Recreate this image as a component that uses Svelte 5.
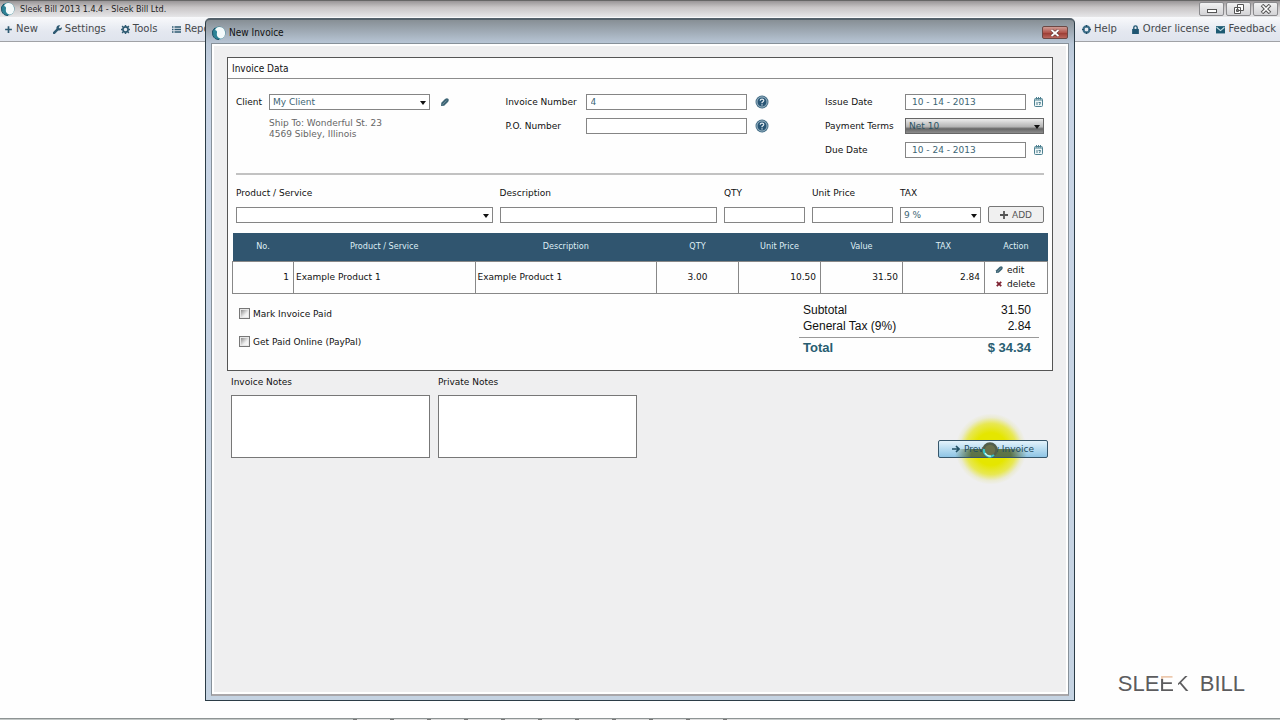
<script lang="ts">
    type Item = { name: string; description: string; qty: number; price: number; tax: number };

    let client = $state("My Client");
    let invoiceNumber = $state("4");
    let poNumber = $state("");
    let issueDate = $state("10 - 14 - 2013");
    let dueDate = $state("10 - 24 - 2013");
    let terms = $state("Net 10");
    let taxRate = $state("9 %");
    let paid = $state(false);
    let paypal = $state(false);
    let items: Item[] = $state([
        { name: "Example Product 1", description: "Example Product 1", qty: 3, price: 10.5, tax: 2.84 },
    ]);

    const subtotal = $derived(items.reduce((sum, i) => sum + i.qty * i.price, 0));
    const tax = $derived(items.reduce((sum, i) => sum + i.tax, 0));

    const tabs = Array.from({ length: 11 });

    const remove = (index: number) => {
        items = items.filter((_, i) => i !== index);
    };
</script>

{#snippet logo()}
    <svg class="logo" viewBox="0 0 14 14" aria-hidden="true">
        <circle cx="7" cy="7" r="6.5" fill="#2d8396" />
        <path d="M7 1a6 6 0 0 1 2 11.700C5 12 4.500 9 5 6.500 5.400 5 4 4 3 4 4 2 5 1 7 1z" fill="#f4fafb" />
        <path d="M3 1.800A6.500 6.500 0 0 0 7 13.500" fill="none" stroke="#174f66" stroke-width="1" />
    </svg>
{/snippet}

{#snippet pencil()}
    <svg class="pencil" viewBox="0 0 9 9" aria-hidden="true">
        <path d="M1 8 1.300 4.800 5 1Q7-.3 8.200.8T8 4L4.200 7.700z" fill="#3f6676" />
        <path d="M2.500 6.500 6.500 2.500" stroke="#8ba5b0" stroke-width=".6" />
    </svg>
{/snippet}

{#snippet help()}
    <button class="icon" aria-label="Help">
        <svg width="14" height="14" viewBox="0 0 14 14">
            <circle cx="7" cy="7" r="6.500" fill="#48718a" />
            <circle cx="7" cy="7" r="5" fill="#285575" stroke="#b6cbd7" stroke-width=".8" />
            <path d="M5.200 5.700Q5.200 4.200 7 4.200T8.800 5.600Q8.800 6.500 7 7.500V8.300M7 9.200v1.200" fill="none" stroke="#dfe9ef" stroke-width="1.200" />
        </svg>
    </button>
{/snippet}

{#snippet calendar()}
    <button class="icon" aria-label="Choose date">
        <svg width="9" height="10" viewBox="0 0 9 10">
            <rect x=".5" y="1.500" width="8" height="8" rx="1" fill="#eef6f7" stroke="#4d8090" />
            <path d="M1 3h7M2.500 0v2.500M4.500 0v2.500M6.500 0v2.500" stroke="#4d8090" />
            <path d="M3 5v3M4.500 5.500H6.500L5.500 8" fill="none" stroke="#3b7081" stroke-width=".9" />
        </svg>
    </button>
{/snippet}

<div class="app">
    <header class="titlebar">
        {@render logo()}
        <span class="title">Sleek Bill 2013 1.4.4 - Sleek Bill Ltd.</span>
        <div class="window-buttons">
            <button aria-label="Minimize">
                <svg viewBox="0 0 12 10"><rect x="1.500" y="5.500" width="9" height="3" fill="#fff" stroke="#555" /></svg>
            </button>
            <button aria-label="Restore">
                <svg viewBox="0 0 12 10"><path d="M4.500.5h6v6h-6zM1.500 3.500h6v6h-6z" fill="#fff" stroke="#555" /><path d="M3.500 5.500h2v2h-2z" stroke="#555" fill="none" /></svg>
            </button>
            <button aria-label="Close">
                <svg viewBox="0 0 12 10"><path d="M2 1 10 9M10 1 2 9" stroke="#555" stroke-width="3.600" /><path d="M2.500 1.500 9.500 8.500M9.500 1.500 2.500 8.500" stroke="#fff" stroke-width="1.600" /></svg>
            </button>
        </div>
    </header>

    <nav class="menubar">
        <a href="#new"><svg viewBox="0 0 8 8"><path d="M4 1v6M1 4h6" stroke="#2e5a72" stroke-width="1.500" /></svg>New</a>
        <a href="#settings"><svg viewBox="0 0 8 8"><path d="M1 7 4.500 3.500" stroke="#2e5a72" stroke-width="2.200" stroke-linecap="round" /><path d="M6.500.4A2.400 2.400 0 1 0 7.800 2L6 3 5 2z" fill="#2e5a72" /></svg>Settings</a>
        <a href="#tools"><svg viewBox="0 0 8 8"><circle cx="4" cy="4" r="2.300" fill="none" stroke="#2e5a72" stroke-width="1.500" /><path d="M4 0v1.500M4 6.500V8M0 4h1.500M6.500 4H8M1 1l1 1M6 6l1 1M7 1 6 2M2 6 1 7" stroke="#2e5a72" stroke-width="1.300" /></svg>Tools</a>
        <a href="#reports"><svg viewBox="0 0 9 8"><path d="M0 1.500h1.500M0 4h1.500M0 6.500h1.500M2.500 1.500H9M2.500 4H9M2.500 6.500H9" stroke="#2e5a72" stroke-width="1.300" /></svg>Reports</a>
        <div class="menu-right">
            <a href="#help"><svg viewBox="0 0 8 8"><circle cx="4" cy="4" r="2.700" fill="none" stroke="#3a6c87" stroke-width="2" /><path d="M4 0v2M4 6v2M0 4h2M6 4h2" stroke="#1f4c66" /></svg>Help</a>
            <a class="order" href="#order"><svg viewBox="0 0 8 8"><path d="M2.500 4V2.200Q2.500.8 4 .8T5.500 2.200V4" fill="none" stroke="#1f5672" stroke-width="1.200" /><path d="M1 3.500h6V8H1z" fill="#1f5672" /></svg>Order license</a>
            <a href="#feedback"><svg viewBox="0 0 8 8"><path d="M0 1h8v6.500H0z" fill="#1d5a72" /><path d="M.5 2 4 5 7.500 2" fill="none" stroke="#c6dfe5" /></svg>Feedback</a>
        </div>
    </nav>

    <main class="workspace">
        <div class="brand">
            <span>SLE<span class="e">E</span><span class="k">K</span></span>
            <span>BILL</span>
        </div>
    </main>
    <footer class="tabs">
        {#each tabs as _}
            <span></span>
        {/each}
    </footer>

    <div class="dialog" role="dialog" aria-label="New Invoice">
        <div class="dialog-title">
            {@render logo()}
            <span class="title">New Invoice</span>
            <button class="close" aria-label="Close dialog">
                <svg viewBox="0 0 10 8"><path d="M1.500 1 8.500 7M8.500 1 1.500 7" stroke="#5c3431" stroke-width="3" /><path d="M1.500 1 8.500 7M8.500 1 1.500 7" stroke="#fff" stroke-width="1.800" /></svg>
            </button>
        </div>

        <div class="dialog-body">
            <section class="panel">
                <h2>Invoice Data</h2>

                <div class="fields">
                    <div class="client">
                        <div class="field">
                            <label for="client">Client</label>
                            <span class="select wide">
                                <select id="client" bind:value={client}><option>My Client</option></select>
                            </span>
                            <button class="icon edit-client" aria-label="Edit client">{@render pencil()}</button>
                        </div>
                        <address>Ship To: Wonderful St. 23<br />4569 Sibley, Illinois</address>
                    </div>
                    <div class="numbers">
                        <div class="field">
                            <label for="invoice-number">Invoice Number</label>
                            <input id="invoice-number" type="text" bind:value={invoiceNumber} />
                            {@render help()}
                        </div>
                        <div class="field">
                            <label for="po-number">P.O. Number</label>
                            <input id="po-number" type="text" bind:value={poNumber} />
                            {@render help()}
                        </div>
                    </div>
                    <div class="dates">
                        <div class="field">
                            <label for="issue-date">Issue Date</label>
                            <input id="issue-date" type="text" bind:value={issueDate} />
                            {@render calendar()}
                        </div>
                        <div class="field">
                            <label for="terms">Payment Terms</label>
                            <span class="select terms">
                                <select id="terms" bind:value={terms}><option>Net 10</option></select>
                            </span>
                        </div>
                        <div class="field">
                            <label for="due-date">Due Date</label>
                            <input id="due-date" type="text" bind:value={dueDate} />
                            {@render calendar()}
                        </div>
                    </div>
                </div>

                <div class="line-item">
                    <div>
                        <label for="product">Product / Service</label>
                        <span class="select"><select id="product"><option></option></select></span>
                    </div>
                    <div>
                        <label for="description">Description</label>
                        <input id="description" type="text" />
                    </div>
                    <div>
                        <label for="qty">QTY</label>
                        <input id="qty" type="text" />
                    </div>
                    <div>
                        <label for="price">Unit Price</label>
                        <input id="price" type="text" />
                    </div>
                    <div>
                        <label for="tax">TAX</label>
                        <span class="select"><select id="tax" bind:value={taxRate}><option>9 %</option></select></span>
                    </div>
                    <button class="add">
                        <svg width="8" height="8" viewBox="0 0 8 8"><path d="M4 0v8M0 4h8" stroke="#555" stroke-width="1.800" /></svg>
                        ADD
                    </button>
                </div>

                <table>
                    <thead>
                        <tr>
                            <th class="no">No.</th>
                            <th>Product / Service</th>
                            <th>Description</th>
                            <th class="amount">QTY</th>
                            <th class="amount">Unit Price</th>
                            <th class="amount">Value</th>
                            <th class="amount">TAX</th>
                            <th class="action">Action</th>
                        </tr>
                    </thead>
                    <tbody>
                        {#each items as item, i}
                            <tr>
                                <td class="right">{i + 1}</td>
                                <td>{item.name}</td>
                                <td>{item.description}</td>
                                <td class="center">{item.qty.toFixed(2)}</td>
                                <td class="right">{item.price.toFixed(2)}</td>
                                <td class="right">{(item.qty * item.price).toFixed(2)}</td>
                                <td class="right">{item.tax.toFixed(2)}</td>
                                <td class="actions">
                                    <button>{@render pencil()}edit</button>
                                    <button onclick={() => remove(i)}>
                                        <svg viewBox="0 0 9 9"><path d="M2 2 7 7M7 2 2 7" stroke="#7d2030" stroke-width="2" /></svg>delete
                                    </button>
                                </td>
                            </tr>
                        {/each}
                    </tbody>
                </table>

                <div class="summary">
                    <div class="options">
                        <label><input type="checkbox" bind:checked={paid} />Mark Invoice Paid</label>
                        <label><input type="checkbox" bind:checked={paypal} />Get Paid Online (PayPal)</label>
                    </div>
                    <dl>
                        <div><dt>Subtotal</dt><dd>{subtotal.toFixed(2)}</dd></div>
                        <div><dt>General Tax (9%)</dt><dd>{tax.toFixed(2)}</dd></div>
                        <div class="total"><dt>Total</dt><dd>$ {(subtotal + tax).toFixed(2)}</dd></div>
                    </dl>
                </div>
            </section>

            <div class="bottom">
                <div class="note">
                    <label for="invoice-notes">Invoice Notes</label>
                    <textarea id="invoice-notes"></textarea>
                </div>
                <div class="note">
                    <label for="private-notes">Private Notes</label>
                    <textarea id="private-notes"></textarea>
                </div>
                <div class="preview-wrap">
                    <span class="glow"></span>
                    <button class="preview">
                        <svg width="8" height="8" viewBox="0 0 8 8"><path d="M0 4h6M4 1l3 3-3 3" fill="none" stroke="#235266" stroke-width="1.600" /></svg>
                        Preview Invoice
                    </button>
                    <svg class="busy" viewBox="0 0 18 18" aria-hidden="true">
                        <circle cx="9" cy="9" r="6.500" fill="#69704b" stroke="#525e4b" stroke-width="2.500" />
                        <path d="M3 8a6.200 6.200 0 0 0 10 6" fill="none" stroke="#39c5c8" stroke-width="2.200" />
                        <path d="M4 12a6.200 6.200 0 0 0 6 3" fill="none" stroke="#d5f6f2" stroke-width="1.200" />
                    </svg>
                </div>
            </div>
        </div>
    </div>
</div>

<style>
    :global(body) {
        margin: 0;
    }

    .app {
        position: relative;
        display: flex;
        flex-direction: column;
        min-height: 100vh;
        overflow: hidden;
        background: #fefefe;
        color: #111;
        font: 9px/12px "DejaVu Sans", Verdana, sans-serif;
    }

    .app * {
        box-sizing: border-box;
    }

    button,
    input,
    select,
    textarea {
        margin: 0;
        font: inherit;
        color: inherit;
    }

    button {
        display: flex;
        align-items: center;
        justify-content: center;
        padding: 0;
        cursor: pointer;
    }

    /* main window */
    .titlebar {
        display: flex;
        align-items: center;
        gap: 5px;
        height: 17px;
        padding: 0 2px 0 1px;
        border-top: 1px solid #666;
        background: linear-gradient(#999597, #c8c5c6 40%, #e6e6e8);
    }

    .logo {
        flex: none;
        width: 14px;
        height: 14px;
    }

    .title {
        flex: 1;
        font: 9px/14px "DejaVu Sans Condensed", Tahoma, sans-serif;
        color: #222;
    }

    .window-buttons {
        display: flex;
        gap: 2px;
    }

    .window-buttons button {
        width: 25px;
        height: 14px;
        border: 1px solid #8b8b8e;
        border-radius: 2px;
        background: linear-gradient(#f1f1f2, #d3d3d6);
    }

    .window-buttons svg {
        width: 12px;
        height: 10px;
    }

    .menubar {
        display: flex;
        align-items: center;
        gap: 15px;
        height: 25px;
        padding: 0 4px;
        border-bottom: 1px solid #a0a2a6;
        background: linear-gradient(#f8f9fb, #e4e8f0 60%, #dfe4ed);
        font-size: 10px;
    }

    .menubar a {
        display: flex;
        align-items: center;
        gap: 3px;
        color: #45484c;
        text-decoration: none;
        white-space: nowrap;
    }

    .menubar svg {
        width: 9px;
        height: 9px;
    }

    .menu-right {
        display: flex;
        gap: 7px;
        margin-left: auto;
    }

    .menu-right .order {
        margin-left: 7px;
    }

    .workspace {
        display: flex;
        flex: 1;
        align-items: flex-end;
        justify-content: flex-end;
        padding: 0 35px 21px 0;
    }

    .brand {
        display: flex;
        gap: 11px;
        font: 22px/26px "Liberation Sans", Arial, sans-serif;
        color: #5c5c5e;
    }

    .brand .e,
    .brand .k {
        color: transparent;
        -webkit-background-clip: text;
        background-clip: text;
    }

    .brand .e {
        background-image: linear-gradient(#ecc9ae 8px, #5c5c5e 8px);
    }

    .brand .k {
        background-image: linear-gradient(90deg, transparent 4px, #5c5c5e 4px);
    }

    .tabs {
        display: flex;
        justify-content: center;
        height: 2px;
        padding-right: 167px;
        border-top: 1px solid #8e9494;
        background: #c3c8c7;
    }

    .tabs span {
        width: 37px;
        border-left: 4px solid #777;
        background: #ddd;
    }

    /* invoice window */
    .dialog {
        position: absolute;
        top: 18px;
        right: 205px;
        bottom: 19px;
        left: 205px;
        display: flex;
        flex-direction: column;
        padding: 0 5px 4px;
        border: 1px solid #2b3c46;
        border-top: 2px solid #53606a;
        border-radius: 5px 5px 0 0;
        background: linear-gradient(#878f95, #bac8d8 24px, #c9d5e6 60px, #c5d3e2);
    }

    .dialog-title {
        display: flex;
        align-items: center;
        gap: 3px;
        height: 23px;
        padding: 2px 1px 0;
    }

    .dialog .title {
        color: #111;
        font-size: 10px;
    }

    .dialog .close {
        width: 26px;
        height: 13px;
        border: 1px solid #6c4844;
        border-radius: 2px;
        background: linear-gradient(#ce9c95, #b1554c 50%, #98382f 51%, #b9665d);
    }

    .close svg {
        width: 10px;
        height: 8px;
    }

    .dialog-body {
        flex: 1;
        padding: 13px 15px 0;
        border: 1px solid #87919a;
        border-bottom: 2px solid #a9a7aa;
        background: #efeff0;
        box-shadow: inset 0 0 0 2px #fff;
    }

    .panel {
        border: 1px solid #555;
        background: #fefefe;
    }

    h2 {
        margin: 0;
        padding: 1px 4px 0;
        border-bottom: 1px solid #8d8d8d;
        font: 10px/19px "DejaVu Sans Condensed", Tahoma, sans-serif;
    }

    .fields {
        display: flex;
        justify-content: space-between;
        margin: 0 8px;
        padding: 15px 0 15px;
        border-bottom: 2px solid #c2c2c2;
    }

    .numbers,
    .dates {
        display: flex;
        flex-direction: column;
        gap: 8px;
    }

    .field {
        display: flex;
        align-items: center;
        height: 16px;
    }

    .client label {
        width: 33px;
    }

    .numbers label,
    .dates label {
        width: 80px;
    }

    input[type="text"],
    select {
        display: block;
        width: 100%;
        height: 16px;
        padding: 0 4px;
        border: 1px solid #858585;
        border-radius: 0;
        outline: none;
        background: #fff;
        color: #3d6574;
        line-height: 14px;
    }

    select {
        appearance: none;
        padding: 0 3px;
    }

    .numbers input[type="text"] {
        width: 161px;
    }

    .dates input[type="text"] {
        width: 121px;
        padding: 0 6px;
    }

    .select {
        position: relative;
        display: block;
    }

    .select::after {
        content: "";
        position: absolute;
        top: 7px;
        right: 4px;
        border: 3px solid transparent;
        border-top: 4px solid #111;
        border-bottom: 0;
        pointer-events: none;
    }

    .select.wide {
        width: 161px;
    }

    .select.terms {
        width: 139px;
    }

    .terms select {
        border-color: #666;
        background: linear-gradient(#ececec, #b4b4b4 55%, #666 70%, #8c8c8c);
        color: #2c5564;
    }

    .icon {
        margin-left: 8px;
        border: 0;
        background: none;
    }

    .edit-client {
        margin-left: 10px;
    }

    .pencil {
        width: 9px;
        height: 9px;
    }

    address {
        margin: 8px 0 0 33px;
        color: #666;
        font-style: normal;
        line-height: 11px;
    }

    .line-item {
        display: grid;
        grid-template-columns: 255fr 216fr 81px 81px 81px 56px;
        align-items: end;
        gap: 7px;
        margin: 12px 8px 10px;
    }

    .line-item label {
        display: block;
        margin-bottom: 8px;
    }

    .add {
        gap: 4px;
        height: 17px;
        border: 1px solid #777;
        border-radius: 2px;
        background: #f0f0f0;
        color: #555;
    }

    table {
        width: calc(100% - 8px);
        margin: 0 4px;
        border-collapse: collapse;
        table-layout: fixed;
    }

    th {
        height: 28px;
        padding: 0 0 1px;
        background: #30556f;
        color: #dfeef5;
        font: 9px/12px "DejaVu Sans Condensed", Tahoma, sans-serif;
    }

    td {
        height: 32px;
        padding: 0 2px;
        border: 1px solid #888;
    }

    .no {
        width: 61px;
    }

    .amount {
        width: 82px;
    }

    .action {
        width: 63px;
    }

    .right {
        padding-right: 4px;
        text-align: right;
    }

    .center {
        text-align: center;
    }

    .actions button {
        gap: 4px;
        height: 14px;
        margin-left: 8px;
        border: 0;
        background: none;
    }

    .actions svg {
        width: 8px;
        height: 8px;
    }

    .summary {
        display: flex;
        justify-content: space-between;
        padding: 8px 13px 14px 11px;
    }

    .options {
        display: flex;
        flex-direction: column;
        gap: 16px;
        padding-top: 6px;
    }

    .options label {
        display: flex;
        align-items: center;
        gap: 3px;
    }

    .options input {
        appearance: none;
        width: 11px;
        height: 11px;
        margin: 0;
        border: 1px solid #777;
        background: linear-gradient(135deg, #777, #eee 60%, #fff);
        box-shadow: inset 0 0 0 1px #e8e8e8;
    }

    dl {
        width: 240px;
        margin: 0;
        font: 12px/16px "Liberation Sans", Arial, sans-serif;
    }

    dl div {
        display: flex;
        justify-content: space-between;
        padding: 0 8px 0 4px;
    }

    dd {
        margin: 0;
    }

    .total {
        margin-top: 3px;
        padding-top: 2px;
        border-top: 1px solid #999;
        color: #285d71;
        font-weight: bold;
        font-size: 13px;
    }

    .bottom {
        display: flex;
        align-items: flex-end;
        gap: 8px;
        padding: 5px 5px 0 4px;
    }

    .note {
        width: 199px;
    }

    .note label {
        display: block;
        margin-bottom: 7px;
    }

    textarea {
        display: block;
        width: 100%;
        height: 63px;
        border: 1px solid #777;
        resize: none;
    }

    .preview-wrap {
        position: relative;
        margin-left: auto;
    }

    .preview {
        position: relative;
        gap: 4px;
        width: 110px;
        height: 18px;
        border: 1px solid #36566b;
        border-radius: 2px;
        background:
            radial-gradient(circle at 52px 9px, #4c5d20cc 20px, #4c5d2000 36px) 0 8px no-repeat,
            linear-gradient(#e4f3fb, #b8dcf0 50%, #8ec4e5);
        color: #1c4a5e;
    }

    .glow {
        position: absolute;
        top: -27px;
        left: 17px;
        width: 72px;
        height: 72px;
        border-radius: 50%;
        background: radial-gradient(circle, #e5e600 32%, #e6e62acc 50%, #e4e4a060 62%, #eeeecc00 70%);
    }

    .busy {
        position: absolute;
        top: 1px;
        left: 43px;
        width: 18px;
        height: 18px;
    }
</style>
